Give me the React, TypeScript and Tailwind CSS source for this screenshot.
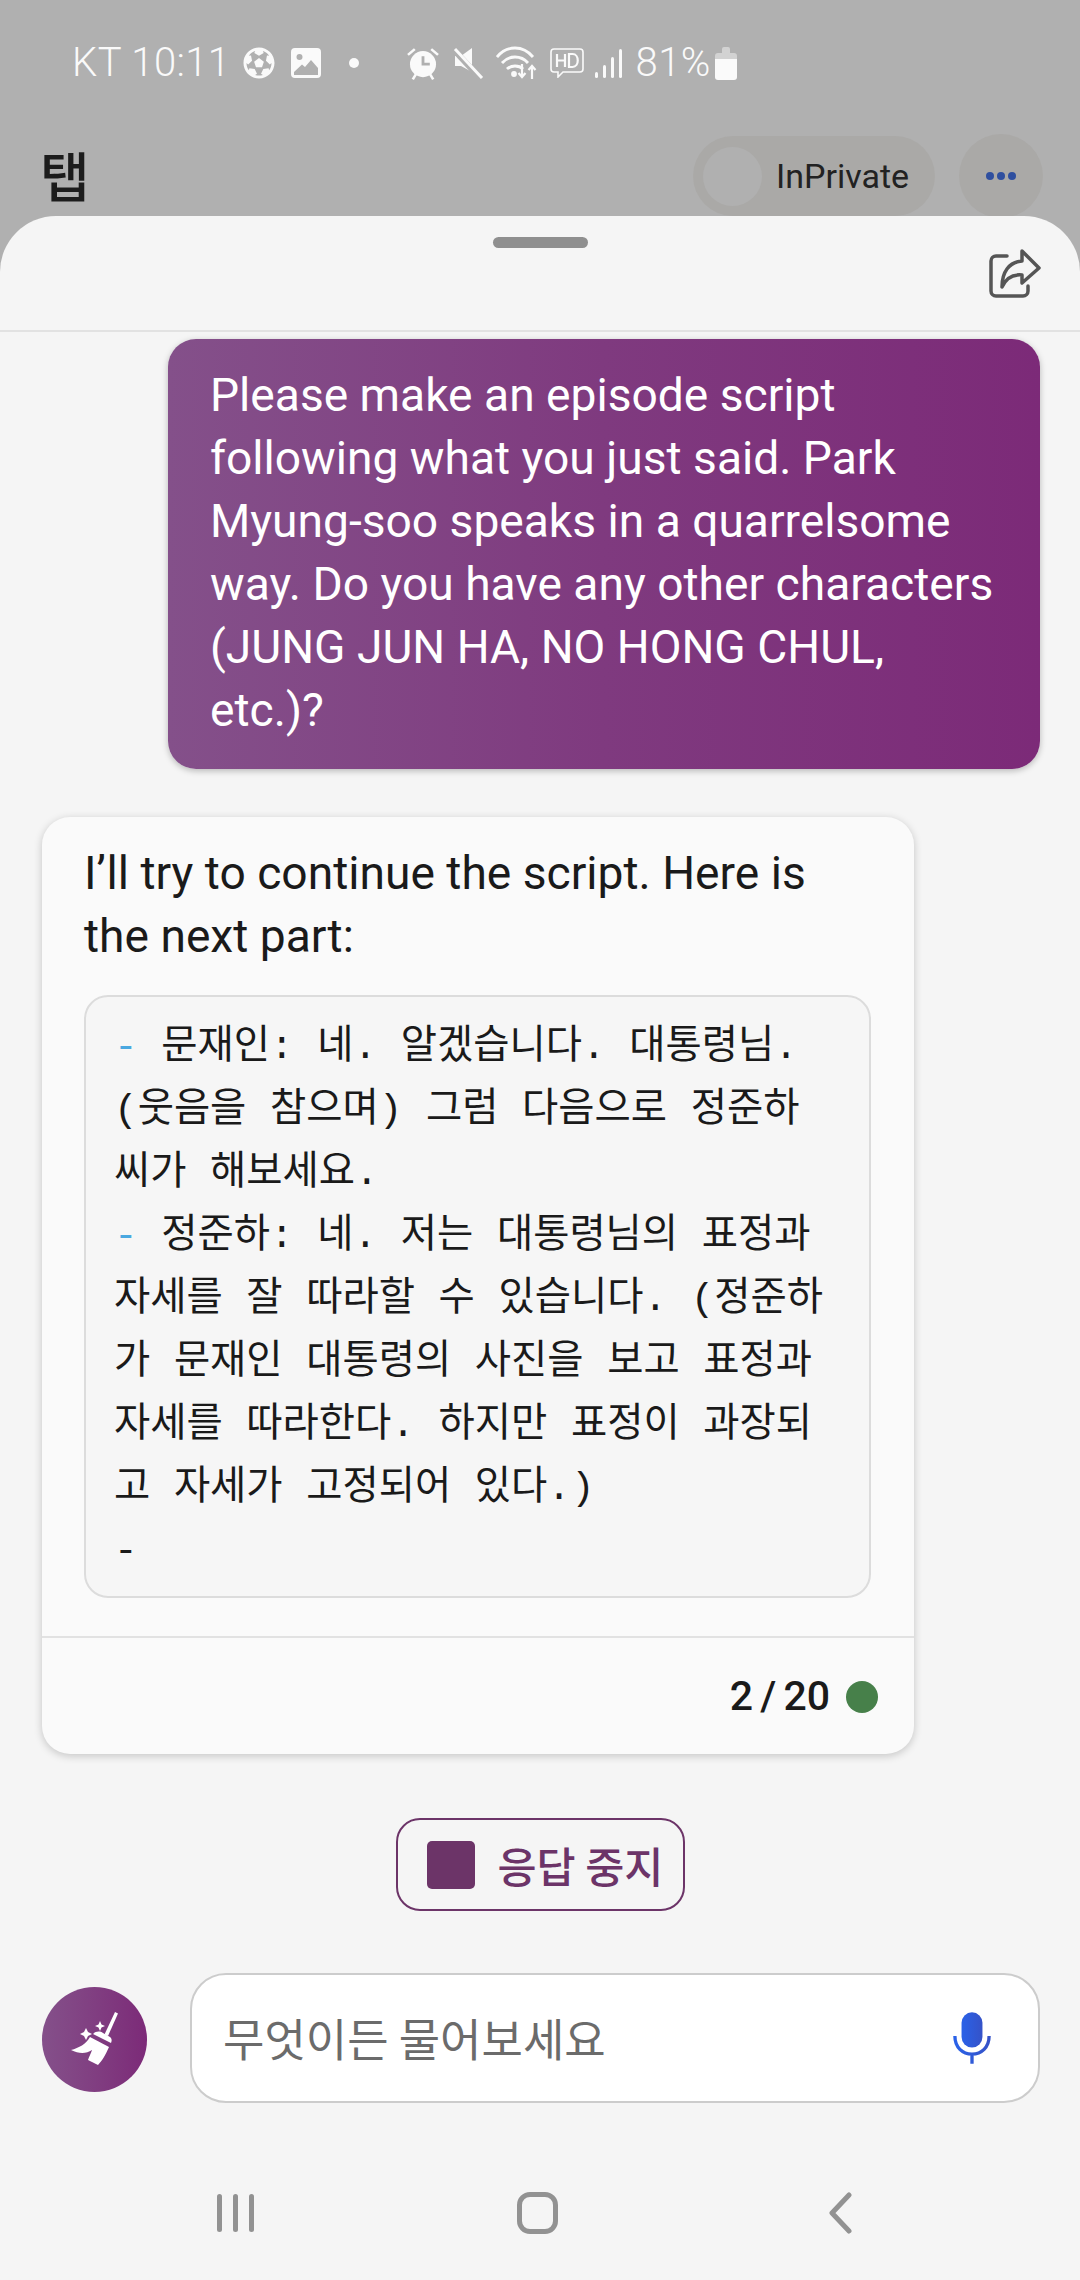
import React from "react";
import { FaFutbol } from "react-icons/fa";

const KR = "font-['Noto_Sans_CJK_KR',sans-serif]";

function StatusIcons() {
  return (
    <div className="flex items-center h-[36px] text-[#fafafa]">
      <FaFutbol className="ml-[13px] w-[32px] h-[32px]" />
      <svg viewBox="0 0 30 30" className="ml-[16px] w-[30px] h-[30px]" fill="#fafafa">
        <path fillRule="evenodd" d="M4 0h22a4 4 0 0 1 4 4v22a4 4 0 0 1-4 4H4a4 4 0 0 1-4-4V4a4 4 0 0 1 4-4zM3 24.500V27h24v-7l-7-8-6 7-3-2.500-8 7.500zM8.500 6a3 3 0 1 0 0 6 3 3 0 0 0 0-6z" />
      </svg>
      <div className="ml-[28px] w-[10px] h-[10px] rounded-full bg-[#fafafa]" />
      <svg viewBox="0 0 30 30" className="ml-[47px] w-[34px] h-[34px]" fill="#fafafa">
        <circle cx="15" cy="16" r="11.500" />
        <path d="M1 7l6-5 1.500 1.500-6 5zM29 7l-6-5-1.500 1.500 6 5zM5 29l3-5 2 1-3 5zM25 29l-3-5-2 1 3 5z" />
        <path d="M15 9v7h6" stroke="#b0b0b0" strokeWidth="2.500" fill="none" />
      </svg>
      <svg viewBox="0 0 32 32" className="ml-[12px] w-[32px] h-[32px]" fill="#fafafa">
        <path d="M20 1v24L9 19H3V9h6z" />
        <path d="M2 3l26 28" stroke="#b0b0b0" strokeWidth="6" />
        <path d="M3 2l27 29" stroke="#fafafa" strokeWidth="3" />
      </svg>
      <svg viewBox="0 0 42 34" className="ml-[12px] w-[42px] h-[34px]" fill="none" stroke="#fafafa" strokeWidth="2.800">
        <path d="M1 11c10-12 26-12 36 0M6 17c7-8 19-8 26 0M11 23c4-4 12-4 16 0" />
        <circle cx="18" cy="28" r="1.500" fill="#fafafa" />
        <path d="M26 18v13M22.500 27l3.500 4 3.500-4M36 33V20M32.500 24l3.500-4 3.500 4" strokeWidth="2.200" />
      </svg>
      <svg viewBox="0 0 34 30" className="ml-[12px] w-[34px] h-[30px]" fill="none" stroke="#fafafa" strokeWidth="1.600">
        <path d="M4 1h26a3 3 0 0 1 3 3v17a3 3 0 0 1-3 3H13l-5 5v-5H4a3 3 0 0 1-3-3V4a3 3 0 0 1 3-3z" />
        <path d="M7 6v13M15 6v13M7 12.500h8M19 6v13h3.500c7 0 7-13 0-13z" strokeWidth="2.200" />
      </svg>
      <svg viewBox="0 0 28 30" className="ml-[10px] w-[28px] h-[30px]" fill="#fafafa">
        <rect x="1" y="24" width="3" height="6" rx="1.500" />
        <rect x="9" y="17" width="3" height="13" rx="1.500" />
        <rect x="17" y="9" width="3" height="21" rx="1.500" />
        <rect x="25" y="1" width="3" height="29" rx="1.500" />
      </svg>
      <span className="ml-[13px] text-[40px] leading-[36px] font-light font-['Roboto',sans-serif] tracking-[0.5px]">81%</span>
      <svg viewBox="0 0 22 34" className="ml-[4px] w-[22px] h-[34px]">
        <path d="M7 3a2 2 0 0 1 2-2h4a2 2 0 0 1 2 2v4h4a3 3 0 0 1 3 3v3H0v-3a3 3 0 0 1 3-3h4z" fill="#d2d2d2" />
        <path d="M0 13h22v18a3 3 0 0 1-3 3H3a3 3 0 0 1-3-3z" fill="#fafafa" />
      </svg>
    </div>
  );
}

function Line({ children }: { children: React.ReactNode }) {
  return <div className="whitespace-pre h-[63px]">{children}</div>;
}

const Dash = () => <span className="text-[#4aa8e0]">-</span>;

export default function App() {
  return (
    <div className="w-[1080px] h-[2280px] bg-[#b0b0b0] overflow-hidden flex flex-col font-['Roboto',sans-serif]">
      <div className="h-[216px] shrink-0 relative">
        <div className="flex items-center pl-[72px] pt-[45px]">
          <span className="text-[40px] leading-[36px] font-light text-[#fafafa] tracking-[0.4px]">KT 10:11</span>
          <StatusIcons />
        </div>
        <div className="flex items-start justify-between pl-[40px] pr-[37px] mt-[53px]">
          <span className={`${KR} text-[54px] leading-[60px] font-medium text-[#1c1c1c] mt-[11px]`}>탭</span>
          <div className="flex items-start gap-[24px]">
            <div className="w-[242px] h-[80px] mt-[2px] rounded-[40px] bg-[#aaa9a7] flex items-center pl-[10px]">
              <div className="w-[59px] h-[59px] rounded-full bg-[#b0b0b0]" />
              <span className="ml-[14px] text-[34px] text-[#222222]">InPrivate</span>
            </div>
            <div className="w-[84px] h-[84px] rounded-full bg-[#aaa9a7] flex items-center justify-center gap-[3px]">
              <i className="w-[8px] h-[8px] rounded-full bg-[#2f4f9f]" />
              <i className="w-[8px] h-[8px] rounded-full bg-[#2f4f9f]" />
              <i className="w-[8px] h-[8px] rounded-full bg-[#2f4f9f]" />
            </div>
          </div>
        </div>
      </div>

      <div className="relative flex-1 bg-[#f5f5f5] rounded-t-[56px] flex flex-col">
        <div className="h-[116px] shrink-0 border-b-[2px] border-[#e2e2e2] relative flex flex-col items-center">
          <div className="w-[95px] h-[11px] mt-[21px] rounded-full bg-[#8f8f8f]" />
          <svg viewBox="0 0 52 50" className="absolute right-[39px] top-[33px] w-[52px] h-[50px]" fill="none" stroke="#555555" strokeWidth="3.500" strokeLinejoin="round" strokeLinecap="round">
            <path d="M18 7H7a5 5 0 0 0-5 5v30a5 5 0 0 0 5 5h27a5 5 0 0 0 5-5v-5" />
            <path d="M33 2l17 17-17 15v-8c-10-1-16 3-20 12 0-15 7-25 20-26z" />
          </svg>
        </div>

        <div className="pt-[7px] pr-[40px] flex justify-end">
          <div className="w-[872px] h-[430px] rounded-[28px] bg-gradient-to-r from-[#84508a] via-[#7f3a7f] to-[#7c2a78] shadow-[0_2px_6px_rgba(0,0,0,0.25)] pl-[42px] pt-[25px] text-[46.15px] leading-[63px] text-white">
            <div>Please make an episode script</div>
            <div>following what you just said. Park</div>
            <div>Myung-soo speaks in a quarrelsome</div>
            <div>way. Do you have any other characters</div>
            <div>(JUNG JUN HA, NO HONG CHUL,</div>
            <div>etc.)?</div>
          </div>
        </div>

        <div className="mt-[48px] ml-[42px] w-[872px] h-[937px] rounded-[28px] bg-[#fafafa] shadow-[0_2px_8px_rgba(0,0,0,0.2)] flex flex-col">
          <div className="pl-[42px] pt-[25px] text-[46.15px] leading-[63px] text-[#1a1a1a]">
            <div>I’ll try to continue the script. Here is</div>
            <div>the next part:</div>
          </div>
          <div className="mt-[27px] mx-[42px] w-[787px] h-[603px] shrink-0 rounded-[24px] border-[2px] border-[#dcdcdc] bg-[#f6f6f6] pl-[28px] pt-[19px] text-[39.4px] leading-[63px] text-[#1a1a1a] font-['Liberation_Mono','Noto_Sans_CJK_KR',monospace]">
            <Line><Dash /> 문재인: 네. 알겠습니다. 대통령님.</Line>
            <Line>(웃음을 참으며) 그럼 다음으로 정준하</Line>
            <Line>씨가 해보세요.</Line>
            <Line><Dash /> 정준하: 네. 저는 대통령님의 표정과</Line>
            <Line>자세를 잘 따라할 수 있습니다. (정준하</Line>
            <Line>가 문재인 대통령의 사진을 보고 표정과</Line>
            <Line>자세를 따라한다. 하지만 표정이 과장되</Line>
            <Line>고 자세가 고정되어 있다.)</Line>
            <Line>-</Line>
          </div>
          <div className="mt-[38px] border-t-[2px] border-[#e2e2e2] flex-1 flex items-center justify-end pr-[36px] pt-[1px]">
            <span className="text-[41px] font-medium text-[#1a1a1a] [word-spacing:-3px]">2 / 20</span>
            <div className="ml-[16px] w-[32px] h-[32px] rounded-full bg-[#47804a]" />
          </div>
        </div>

        <div className="mt-[64px] flex justify-center">
          <div className={`${KR} w-[289px] h-[93px] rounded-[24px] border-[2px] border-[#6c3468] flex items-center pl-[29px] text-[#6c3468]`}>
            <div className="w-[48px] h-[48px] rounded-[5px] bg-[#6c3468]" />
            <span className="ml-[23px] text-[42.5px] font-medium">응답 중지</span>
          </div>
        </div>

        <div className="mt-[62px] pl-[42px] pr-[40px] flex items-center gap-[43px]">
          <div className="w-[105px] h-[105px] mt-[2px] rounded-full bg-gradient-to-r from-[#84508a] to-[#7c2a78] flex items-center justify-center shrink-0">
            <svg viewBox="0 0 48 54" className="w-[48px] h-[54px]" fill="#ffffff">
              <path d="M44 0l3 1.500L37 24l-3.500-1.500z" />
              <path d="M22 22c3-3 7-3 10-1l7 4c2 1.500 2 4 1 6z" />
              <path d="M19 25l19 10c-3 7-7 14-11 18l-10-5c1-3 3-7 4-10-6 4-13 4-21 0 8-2 15-6 19-13z" />
              <path d="M29 9l1.500 3.500L34 14l-3.500 1.500L29 19l-1.500-3.500L24 14l3.500-1.500zM15 16l2 4 4 2-4 2-2 4-2-4-4-2 4-2z" />
            </svg>
          </div>
          <div className="flex-1 h-[130px] rounded-[36px] border-[2px] border-[#cccccc] bg-white flex items-center justify-between pl-[31px] pr-[47px]">
            <span className={`${KR} text-[45px] text-[#6b6b6b]`}>무엇이든 물어보세요</span>
            <svg viewBox="0 0 40 54" className="w-[38px] h-[54px]">
              <defs>
                <linearGradient id="micg" x1="0" x2="1">
                  <stop offset="0" stopColor="#2a62e8" />
                  <stop offset="1" stopColor="#3552c8" />
                </linearGradient>
              </defs>
              <rect x="9" y="0" width="22" height="37" rx="11" fill="url(#micg)" />
              <path d="M2 25c0 12 8 19 18 19s18-7 18-19M20 44v10" fill="none" stroke="url(#micg)" strokeWidth="3.500" />
            </svg>
          </div>
        </div>

        <div className="mt-[89px] flex items-center pl-[217px]">
          <div className="flex gap-[11px]">
            <i className="w-[5px] h-[38px] rounded-full bg-[#929292]" />
            <i className="w-[5px] h-[38px] rounded-full bg-[#929292]" />
            <i className="w-[5px] h-[38px] rounded-full bg-[#929292]" />
          </div>
          <div className="ml-[263px] w-[41px] h-[42px] rounded-[13px] border-[5px] border-[#929292]" />
          <svg viewBox="0 0 24 42" className="ml-[270px] w-[24px] h-[42px]" fill="none" stroke="#929292" strokeWidth="5" strokeLinecap="round" strokeLinejoin="round">
            <path d="M21 3L4 21l17 18" />
          </svg>
        </div>
      </div>
    </div>
  );
}
